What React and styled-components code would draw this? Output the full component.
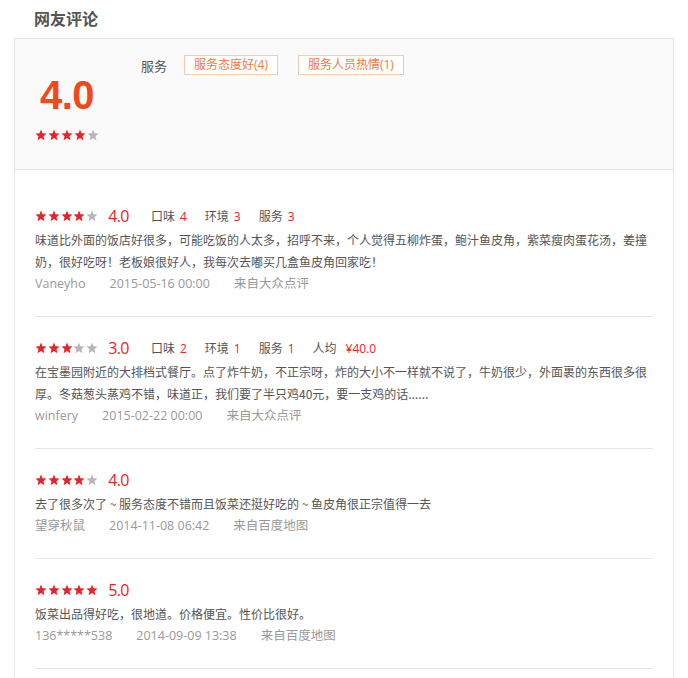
import React from 'react';
import styled, { createGlobalStyle } from 'styled-components';

const GlobalStyle = createGlobalStyle`
  body {
    margin: 0;
    background: #fff;
    font-family: "Open Sans", "Noto Sans CJK SC", sans-serif;
    color: #555;
  }
`;

const Page = styled.div`
  padding: 0 15px 0 14px;
`;

const Title = styled.h3`
  margin: 0;
  height: 38px;
  line-height: 36px;
  padding-left: 20px;
  font-size: 16px;
  font-weight: bold;
  color: #555;
  font-family: "Noto Sans CJK SC", sans-serif;
`;

const Box = styled.div`
  width: 660px;
  box-sizing: border-box;
  border: 1px solid #e6e6e6;
`;

const Summary = styled.div`
  display: flex;
  box-sizing: border-box;
  height: 131px;
  padding: 16px 20px 0;
  background: #fafafa;
  border-bottom: 1px solid #e6e6e6;
`;

const ScoreCol = styled.div`
  width: 64px;
  padding-top: 20px;
  display: flex;
  flex-direction: column;
  align-items: center;
`;

const BigScore = styled.div`
  font-family: "Liberation Sans", Arial, sans-serif;
  font-weight: bold;
  font-size: 40px;
  line-height: 40px;
  color: #ee4a1c;
  letter-spacing: -0.5px;
`;

const StarRow = styled.div`
  display: flex;
  gap: 0.8px;
  margin-top: ${p => p.$mt || 0}px;
`;

const TagRow = styled.div`
  display: flex;
  align-items: center;
  margin-left: 42px;
  height: 20px;
`;

const TagLabel = styled.span`
  font-size: 13px;
  color: #555;
  margin-right: 17px;
  font-family: "Noto Sans CJK SC", sans-serif;
`;

const Tag = styled.span`
  box-sizing: border-box;
  height: 20px;
  line-height: 18px;
  padding: 0 9px;
  margin-right: 20px;
  border: 1px solid #f5cbb4;
  background: #fff;
  color: #f27a3e;
  font-size: 12px;
`;

const List = styled.div`
  padding: 15px 20px 20px;
`;

const Review = styled.div`
  padding: 20px 0 21px;
  border-bottom: 1px solid #e6e6e6;
`;

const Head = styled.div`
  display: flex;
  align-items: center;
  height: 22px;
  line-height: 22px;
`;

const Rating = styled.span`
  margin-left: 10px;
  margin-right: 4px;
  font-size: 16px;
  color: #e4252a;
  letter-spacing: -0.6px;
`;

const Aspect = styled.span`
  margin-left: 18px;
  font-size: 12px;
  color: #555;
  font-family: "Noto Sans CJK SC", sans-serif;
`;

const AspectVal = styled.span`
  margin-left: ${p => p.$gap || 5}px;
  color: #e4252a;
  font-family: "Open Sans", sans-serif;
  font-size: 12px;
`;

const Text = styled.p`
  margin: 2px 0 0;
  font-size: 12px;
  line-height: 22px;
  color: #555;
  font-family: "Noto Sans CJK SC", sans-serif;
`;

const Meta = styled.div`
  display: flex;
  gap: 24px;
  font-size: 12.5px;
  line-height: 22px;
  color: #999;
`;

const Star = ({ on }) => (
  <svg width="12" height="12" viewBox="0 0 24 24">
    <polygon
      points="12,1 15,8.4 23,9.1 17,14.4 18.8,22.3 12,18.2 5.2,22.3 7,14.4 1,9.1 9,8.4"
      fill={on ? '#e4252a' : '#b7b7b7'}
    />
  </svg>
);

const Stars = ({ n, mt }) => (
  <StarRow $mt={mt}>
    {[0, 1, 2, 3, 4].map(i => <Star key={i} on={i < n} />)}
  </StarRow>
);

const reviews = [
  {
    stars: 4,
    score: '4.0',
    aspects: [['口味', '4'], ['环境', '3'], ['服务', '3']],
    text: '味道比外面的饭店好很多，可能吃饭的人太多，招呼不来，个人觉得五柳炸蛋，鲍汁鱼皮角，紫菜瘦肉蛋花汤，姜撞奶，很好吃呀！老板娘很好人，我每次去嘟买几盒鱼皮角回家吃！',
    user: 'Vaneyho',
    date: '2015-05-16 00:00',
    from: '来自大众点评',
  },
  {
    stars: 3,
    score: '3.0',
    aspects: [['口味', '2'], ['环境', '1'], ['服务', '1'], ['人均', '¥40.0', 9]],
    text: '在宝墨园附近的大排档式餐厅。点了炸牛奶，不正宗呀，炸的大小不一样就不说了，牛奶很少，外面裹的东西很多很厚。冬菇葱头蒸鸡不错，味道正，我们要了半只鸡40元，要一支鸡的话......',
    user: 'winfery',
    date: '2015-02-22 00:00',
    from: '来自大众点评',
  },
  {
    stars: 4,
    score: '4.0',
    aspects: [],
    text: '去了很多次了 ~ 服务态度不错而且饭菜还挺好吃的 ~ 鱼皮角很正宗值得一去',
    user: '望穿秋鼠',
    date: '2014-11-08 06:42',
    from: '来自百度地图',
  },
  {
    stars: 5,
    score: '5.0',
    aspects: [],
    text: '饭菜出品得好吃，很地道。价格便宜。性价比很好。',
    user: '136*****538',
    date: '2014-09-09 13:38',
    from: '来自百度地图',
  },
];

const App = () => (
  <Page>
    <GlobalStyle />
    <Title>网友评论</Title>
    <Box>
      <Summary>
        <ScoreCol>
          <BigScore>4.0</BigScore>
          <Stars n={4} mt={14} />
        </ScoreCol>
        <TagRow>
          <TagLabel>服务</TagLabel>
          <Tag>服务态度好(4)</Tag>
          <Tag>服务人员热情(1)</Tag>
        </TagRow>
      </Summary>
      <List>
        {reviews.map((r, i) => (
          <Review key={i}>
            <Head>
              <Stars n={r.stars} />
              <Rating>{r.score}</Rating>
              {r.aspects.map(([label, val, gap], j) => (
                <Aspect key={j}>
                  {label}
                  <AspectVal $gap={gap}>{val}</AspectVal>
                </Aspect>
              ))}
            </Head>
            <Text>{r.text}</Text>
            <Meta>
              <span>{r.user}</span>
              <span>{r.date}</span>
              <span>{r.from}</span>
            </Meta>
          </Review>
        ))}
      </List>
    </Box>
  </Page>
);

export default App;
